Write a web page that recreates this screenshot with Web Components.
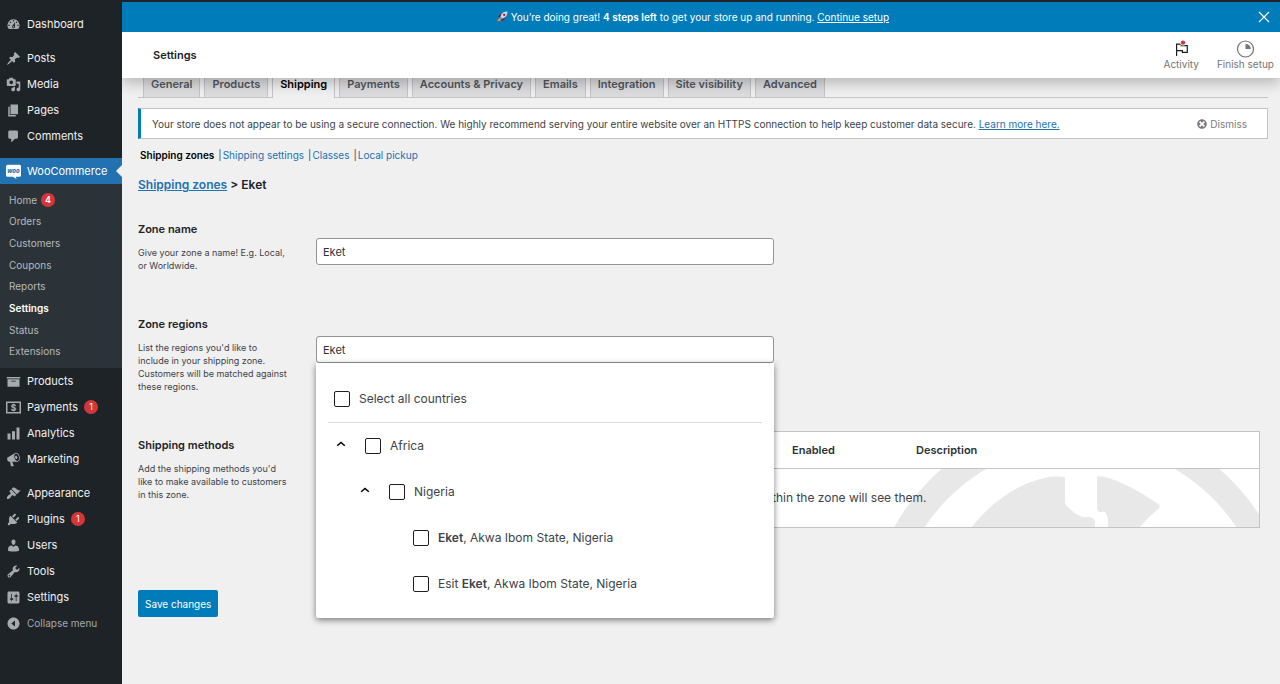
<!DOCTYPE html>
<html lang="en">
<head>
<meta charset="utf-8">
<meta name="viewport" content="width=device-width, initial-scale=1">
<title>Shipping zones - WooCommerce settings</title>
<style>
  body {
    margin: 0;
    background: #f0f0f0;
    color: #3c434a;
    font-family: Inter, "Liberation Sans", sans-serif;
    font-size: 11px;
    line-height: 16px;
  }
</style>
</head>
<body>
<wp-admin>
  <wp-menu slot="menu"></wp-menu>
  <wc-banner slot="top"></wc-banner>
  <wc-header slot="top" heading="Settings"></wc-header>
  <wc-tabs current="Shipping"></wc-tabs>
  <wc-notice></wc-notice>
  <wc-subnav></wc-subnav>
  <wc-zone-form></wc-zone-form>
</wp-admin>

<script>
const ICONS = {
  dashboard: 'M3.76 16h12.48A7.998 7.998 0 0 0 10 3a7.998 7.998 0 0 0-6.24 13zM10 4c.55 0 1 .45 1 1s-.45 1-1 1-1-.45-1-1 .45-1 1-1zM6 6c.55 0 1 .45 1 1s-.45 1-1 1-1-.45-1-1 .45-1 1-1zm8 0c.55 0 1 .45 1 1s-.45 1-1 1-1-.45-1-1 .45-1 1-1zm-5.37 5.55L12 7v6c0 1.1-.9 2-2 2s-2-.9-2-2c0-.57.24-1.08.63-1.45zM4 10c.55 0 1 .45 1 1s-.45 1-1 1-1-.45-1-1 .45-1 1-1zm12 0c.55 0 1 .45 1 1s-.45 1-1 1-1-.45-1-1 .45-1 1-1zm-5 3c0-.55-.45-1-1-1s-1 .45-1 1 .45 1 1 1 1-.45 1-1z',
  post: 'M10.44 3.02l1.82-1.82 6.36 6.35-1.83 1.82c-1.05-.68-2.48-.57-3.41.36l-.75.75c-.92.93-1.04 2.35-.35 3.41l-1.83 1.82-2.41-2.41-2.8 2.79c-.42.42-3.38 2.71-3.8 2.29s1.86-3.39 2.28-3.81l2.79-2.79L4.1 9.36l1.83-1.82c1.05.69 2.48.57 3.4-.36l.75-.75c.93-.92 1.05-2.35.36-3.41z',
  media: 'M13 11V4c0-.55-.45-1-1-1h-1.67L9 1H5L3.67 3H2c-.55 0-1 .45-1 1v7c0 .55.45 1 1 1h10c.55 0 1-.45 1-1zM7 4.5c1.38 0 2.5 1.12 2.5 2.5S8.38 9.5 7 9.5 4.5 8.38 4.5 7 5.62 4.5 7 4.5zM14 6h5v10.5c0 1.38-1.12 2.5-2.5 2.5S14 17.88 14 16.5s1.12-2.5 2.5-2.5c.17 0 .34.02.5.05V9h-3V6zm-4 8.05V13h2v3.5c0 1.38-1.12 2.5-2.5 2.5S7 17.88 7 16.5 8.12 14 9.5 14c.17 0 .34.02.5.05z',
  page: 'M6 15V2h10v13H6zm-1 1h8v2H3V5h2v11z',
  comments: 'M5 2h9c1.1 0 2 .9 2 2v7c0 1.1-.9 2-2 2h-2l-5 5v-5H5c-1.1 0-2-.9-2-2V4c0-1.1.9-2 2-2z',
  archive: 'M19 4v2H1V4h18zM2 7h16v10H2V7zm11 3V9H7v1h6z',
  chart: 'M18 18V2h-4v16h4zm-6 0V7H8v11h4zm-6 0v-8H2v8h4z',
  megaphone: 'M18.15 5.94c.46 1.62.38 3.22-.02 4.48-.42 1.28-1.26 2.18-2.3 2.48-.16.06-.26.06-.4.06-.06.02-.12.02-.18.02-.06.02-.14.02-.22.02h-6.8l2.22 5.5c.02.14-.06.26-.14.34-.08.1-.24.16-.34.16H6.95c-.1 0-.26-.06-.34-.16-.08-.08-.16-.2-.14-.34l-1-5.5H4.25l-.02-.02c-.5.06-1.08-.18-1.54-.62s-.88-1.08-1.06-1.88c-.24-.8-.2-1.56-.02-2.2.18-.62.58-1.08 1.06-1.3l.02-.02 9-5.4c.1-.06.18-.1.24-.16.06-.04.14-.08.24-.12.16-.08.28-.12.5-.18 1.04-.3 2.24.1 3.22.98s1.84 2.24 2.26 3.86zm-2.58 5.98h-.02c.4-.1.74-.34 1.04-.7.58-.7.86-1.76.86-3.04 0-.64-.1-1.3-.28-1.98-.34-1.36-1.02-2.5-1.78-3.24s-1.68-1.1-2.46-.88c-.82.22-1.4.96-1.7 2-.32 1.04-.28 2.36.06 3.72.38 1.36 1 2.5 1.8 3.24.78.74 1.62 1.1 2.48.88zm-2.54-7.08c.22-.04.42-.02.62.04.38.16.76.48 1.02 1s.42 1.2.42 1.78c0 .3-.04.56-.12.8-.18.48-.44.84-.86.94-.34.1-.8-.06-1.14-.4s-.64-.86-.78-1.5c-.18-.62-.12-1.24.02-1.72s.48-.84.82-.94z',
  appearance: 'M14.48 11.06L7.41 3.99l1.5-1.5c.5-.56 2.3-.47 3.51.32 1.21.8 1.43 1.28 2.91 2.1 1.18.64 2.45 1.26 4.45.85zm-.71.71L6.7 4.7 4.93 6.47c-.39.39-.39 1.02 0 1.41l1.06 1.06c.39.39.39 1.03 0 1.42-.6.6-1.43 1.11-2.21 1.69-.35.26-.7.53-1.01.84C1.43 14.23.4 16.08 1.4 17.07c.99 1 2.84-.03 4.18-1.36.31-.31.58-.66.85-1.02.57-.78 1.08-1.61 1.69-2.21.39-.39 1.02-.39 1.41 0l1.06 1.06c.39.39 1.02.39 1.41 0z',
  plugins: 'M13.11 4.36L9.87 7.6 8 5.73l3.24-3.24c.35-.34 1.05-.2 1.56.32.52.51.66 1.21.31 1.55zm-8 1.77l.91-1.12 9.01 9.01-1.19.84c-.71.71-2.63 1.16-3.82 1.16H6.14L4.9 17.26c-.59.59-1.54.59-2.12 0-.59-.58-.59-1.53 0-2.12l1.24-1.24v-3.88c0-1.13.4-3.19 1.09-3.89zm7.26 3.97l3.24-3.24c.34-.35 1.04-.21 1.55.31.52.51.66 1.21.31 1.55l-3.24 3.25z',
  users: 'M10 9.25c-2.27 0-2.73-3.44-2.73-3.44C7 4.02 7.82 2 9.97 2c2.16 0 2.98 2.02 2.71 3.81 0 0-.41 3.44-2.68 3.44zm0 2.57L12.72 10c2.39 0 4.52 2.33 4.52 4.53v2.49s-3.65 1.13-7.24 1.13c-3.65 0-7.24-1.13-7.24-1.13v-2.49c0-2.25 1.94-4.48 4.47-4.48z',
  tools: 'M16.68 9.77c-1.34 1.34-3.3 1.67-4.95.99l-5.41 6.52c-.99.99-2.59.99-3.58 0s-.99-2.59 0-3.57l6.52-5.42c-.68-1.65-.35-3.61.99-4.95 1.28-1.28 3.12-1.62 4.72-1.06l-2.89 2.89 2.82 2.82 2.86-2.87c.53 1.58.18 3.39-1.08 4.65zM3.81 16.21c.4.39 1.04.39 1.43 0 .4-.4.4-1.04 0-1.43-.39-.4-1.03-.4-1.43 0-.39.39-.39 1.03 0 1.43z',
  settings: 'M18 16V4c0-1.1-.9-2-2-2H4c-1.1 0-2 .9-2 2v12c0 1.1.9 2 2 2h12c1.1 0 2-.9 2-2zM8 11h1c.55 0 1 .45 1 1s-.45 1-1 1H8v1.5c0 .28-.22.5-.5.5s-.5-.22-.5-.5V13H6c-.55 0-1-.45-1-1s.45-1 1-1h1V5.5c0-.28.22-.5.5-.5s.5.22.5.5V11zm5-2h-1c-.55 0-1-.45-1-1s.45-1 1-1h1V5.5c0-.28.22-.5.5-.5s.5.22.5.5V7h1c.55 0 1 .45 1 1s-.45 1-1 1h-1v5.5c0 .28-.22.5-.5.5s-.5-.22-.5-.5V9z',
  collapse: 'M10 2c4.42 0 8 3.58 8 8s-3.58 8-8 8-8-3.58-8-8 3.58-8 8-8zm2 12V6l-5 4z',
  dismiss: 'M10 2c4.42 0 8 3.58 8 8s-3.58 8-8 8-8-3.58-8-8 3.58-8 8-8zm5 11l-3-3 3-3-2-2-3 3-3-3-2 2 3 3-3 3 2 2 3-3 3 3z'
};

// Icons that are more than one filled path
const DRAWN = {
  woo: `
    <path fill="#fff" d="M2 1h16a2 2 0 0 1 2 2v12a2 2 0 0 1-2 2h-5l1 3-5-3H2a2 2 0 0 1-2-2V3a2 2 0 0 1 2-2z"/>
    <text x="10" y="12" text-anchor="middle" font-size="8" font-weight="800" font-style="italic" fill="#2271b1">woo</text>`,
  payments: `
    <rect x="1" y="3" width="18" height="14" fill="none" stroke="currentColor" stroke-width="2"/>
    <text x="10" y="14" text-anchor="middle" font-size="11" font-weight="800">$</text>`
};

class WpIcon extends HTMLElement {
  connectedCallback() {
    const name = this.getAttribute('name');
    const size = this.getAttribute('size') || 15;
    if (!this.shadowRoot) this.attachShadow({ mode: 'open' });
    this.shadowRoot.innerHTML = `
      <style>
        :host { display: block; flex: none; }
        svg { display: block; fill: currentColor; overflow: visible; }
      </style>
      <svg width="${size}" height="${size}" viewBox="0 0 20 20" aria-hidden="true">
        ${DRAWN[name] || `<path fill-rule="evenodd" d="${ICONS[name]}"/>`}
      </svg>
    `;
  }
}

class WpAdmin extends HTMLElement {
  constructor() {
    super();
    this.attachShadow({ mode: 'open' }).innerHTML = `
      <style>
        :host {
          display: grid;
          grid-template-columns: 122px minmax(0, 1fr);
          min-height: 100vh;
          box-sizing: border-box;
          border-top: 2px solid #1d2327;
        }
        .top {
          position: relative;
          z-index: 2;
          box-shadow: 0 6px 12px rgba(0, 0, 0, .22);
          clip-path: inset(0 0 -24px 0);
        }
        .content { padding: 0 12px 24px 16px; }
      </style>
      <slot name="menu"></slot>
      <div>
        <div class="top"><slot name="top"></slot></div>
        <main class="content"><slot></slot></main>
      </div>
    `;
  }
}

class WpMenuItem extends HTMLElement {
  connectedCallback() {
    const count = this.getAttribute('count');
    if (!this.shadowRoot) this.attachShadow({ mode: 'open' });
    this.shadowRoot.innerHTML = `
      <style>
        :host { display: block; color: #a7aaad; }
        a {
          display: flex;
          align-items: center;
          gap: 6px;
          height: 26px;
          padding-left: 6px;
          color: inherit;
          text-decoration: none;
        }
        .label { color: #f0f0f1; }
        :host([quiet]) .label { color: #a7aaad; font-size: 10px; }
        :host([current]) a { position: relative; background: #2271b1; }
        :host([current]) .label { color: #fff; }
        :host([current]) a::after {
          content: "";
          position: absolute;
          right: 0;
          border: 6px solid transparent;
          border-right-color: #f0f0f0;
          border-left-width: 0;
        }
        .count {
          min-width: 14px;
          border-radius: 7px;
          background: #d63638;
          color: #fff;
          font-size: 9px;
          line-height: 14px;
          text-align: center;
        }
      </style>
      <a href="#">
        <wp-icon name="${this.getAttribute('icon')}"></wp-icon>
        <span class="label"><slot></slot></span>
        ${count ? `<span class="count">${count}</span>` : ''}
      </a>
    `;
  }
}

class WpMenu extends HTMLElement {
  constructor() {
    super();
    this.attachShadow({ mode: 'open' }).innerHTML = `
      <style>
        :host { display: block; background: #1d2327; }
        nav { padding-top: 9px; }
        .group { margin-bottom: 8px; }
        .group.main { margin-bottom: 9px; }
        ul {
          display: flex;
          flex-direction: column;
          box-sizing: border-box;
          min-height: 184px;
          margin: 0;
          padding: 5px 9px 6px;
          list-style: none;
          background: #2c3338;
          font-size: 10px;
        }
        li { display: flex; align-items: center; flex: 1; gap: 4px; }
        li a { color: #b4b9be; text-decoration: none; }
        li a[aria-current] { color: #fff; font-weight: 600; }
        .count {
          min-width: 14px;
          border-radius: 7px;
          background: #d63638;
          color: #fff;
          font-size: 9px;
          font-weight: 600;
          line-height: 14px;
          text-align: center;
        }
      </style>
      <nav aria-label="Main menu">
        <div class="group"><wp-menu-item icon="dashboard">Dashboard</wp-menu-item></div>
        <div class="group main">
          <wp-menu-item icon="post">Posts</wp-menu-item>
          <wp-menu-item icon="media">Media</wp-menu-item>
          <wp-menu-item icon="page">Pages</wp-menu-item>
          <wp-menu-item icon="comments">Comments</wp-menu-item>
        </div>
        <div class="group">
          <wp-menu-item icon="woo" current>WooCommerce</wp-menu-item>
          <ul>
            <li><a href="#">Home</a><span class="count">4</span></li>
            <li><a href="#">Orders</a></li>
            <li><a href="#">Customers</a></li>
            <li><a href="#">Coupons</a></li>
            <li><a href="#">Reports</a></li>
            <li><a href="#" aria-current="page">Settings</a></li>
            <li><a href="#">Status</a></li>
            <li><a href="#">Extensions</a></li>
          </ul>
          <wp-menu-item icon="archive">Products</wp-menu-item>
          <wp-menu-item icon="payments" count="1">Payments</wp-menu-item>
          <wp-menu-item icon="chart">Analytics</wp-menu-item>
          <wp-menu-item icon="megaphone">Marketing</wp-menu-item>
        </div>
        <wp-menu-item icon="appearance">Appearance</wp-menu-item>
        <wp-menu-item icon="plugins" count="1">Plugins</wp-menu-item>
        <wp-menu-item icon="users">Users</wp-menu-item>
        <wp-menu-item icon="tools">Tools</wp-menu-item>
        <wp-menu-item icon="settings">Settings</wp-menu-item>
        <wp-menu-item icon="collapse" quiet>Collapse menu</wp-menu-item>
      </nav>
    `;
  }
}

class WcBanner extends HTMLElement {
  constructor() {
    super();
    this.attachShadow({ mode: 'open' }).innerHTML = `
      <style>
        :host {
          display: flex;
          align-items: center;
          height: 30px;
          padding: 0 8px;
          background: #007cba;
          color: #fff;
          font-size: 10px;
        }
        p { flex: 1; margin: 0; text-align: center; }
        p svg { vertical-align: -1px; }
        strong { font-weight: 600; }
        a { color: inherit; }
        button {
          display: block;
          padding: 0;
          border: 0;
          background: none;
          color: inherit;
        }
        button svg { display: block; }
      </style>
      <p>
        <svg width="11" height="11" viewBox="0 0 20 20" aria-hidden="true">
          <path fill="#f4900c" d="M1 19c0-3 1-5 3-6l3 3c-1 2-3 3-6 3z"/>
          <path fill="#a0041e" d="M2 10l4-4 4 1-5 5zM10 18l4-4-1-4-5 5z"/>
          <path fill="#ccd6dd" d="M19 1c-6 0-10 2-13 9l4 4c7-3 9-7 9-13z"/>
          <circle cx="13" cy="7" r="2" fill="#a0041e"/>
          <path fill="#55acee" d="M6 11l3 3-3 2-2-2z"/>
        </svg>
        You’re doing great! <strong>4 steps left</strong> to get your store up and running. <a href="#">Continue setup</a>
      </p>
      <button type="button" aria-label="Close">
        <svg width="16" height="16" viewBox="0 0 16 16" fill="none" stroke="currentColor" stroke-width="1.2">
          <path d="M3 3l10 10M13 3L3 13"/>
        </svg>
      </button>
    `;
  }
}

class WcHeader extends HTMLElement {
  connectedCallback() {
    if (!this.shadowRoot) this.attachShadow({ mode: 'open' });
    this.shadowRoot.innerHTML = `
      <style>
        :host {
          display: flex;
          align-items: center;
          height: 46px;
          padding: 0 6px 0 31px;
          background: #fff;
        }
        h1 {
          flex: 1;
          margin: 0;
          color: #1e1e1e;
          font-size: 11px;
          font-weight: 600;
        }
        .actions { display: flex; gap: 18px; }
        button {
          display: grid;
          justify-items: center;
          padding: 0;
          border: 0;
          background: none;
          color: #757575;
          font: inherit;
          font-size: 10px;
          line-height: 12px;
        }
      </style>
      <h1>${this.getAttribute('heading')}</h1>
      <div class="actions">
        <button type="button">
          <svg width="18" height="18" viewBox="0 0 18 18" fill="none" stroke="#1e1e1e" stroke-width="1.2">
            <path d="M4.600 16V4.200h4.600v1.500h6.100v6.600h-4.900v-1.700H4.600"/>
            <circle cx="11" cy="2.800" r="2.800" fill="#fff" stroke="none"/>
            <circle cx="11" cy="2.600" r="2.200" fill="#d63638" stroke="none"/>
          </svg>
          Activity
        </button>
        <button type="button">
          <svg width="18" height="18" viewBox="0 0 18 18" fill="none" stroke="#757575" stroke-width="1.2">
            <circle cx="9.500" cy="9" r="8"/>
            <path fill="#757575" stroke="none" d="M9.500 3.700a5.300 5.300 0 0 1 5.300 5.300H9.500z"/>
          </svg>
          Finish setup
        </button>
      </div>
    `;
  }
}

class WcTabs extends HTMLElement {
  connectedCallback() {
    const current = this.getAttribute('current');
    const tabs = ['General', 'Products', 'Shipping', 'Payments', 'Accounts & Privacy',
      'Emails', 'Integration', 'Site visibility', 'Advanced'];
    if (!this.shadowRoot) this.attachShadow({ mode: 'open' });
    this.shadowRoot.innerHTML = `
      <style>
        :host { display: block; margin-top: -9px; }
        nav {
          display: flex;
          gap: 4px;
          padding-left: 5px;
          border-bottom: 1px solid #c3c4c7;
        }
        a {
          padding: 6px 7px 5px;
          border: 1px solid #c3c4c7;
          border-bottom: 0;
          background: #dcdcde;
          color: #50575e;
          font-weight: 600;
          line-height: 16px;
          text-decoration: none;
        }
        a[aria-current] {
          margin-bottom: -1px;
          background: #f0f0f0;
          color: #000;
        }
      </style>
      <nav aria-label="Settings">
        ${tabs.map(tab => `<a href="#"${tab === current ? ' aria-current="page"' : ''}>${tab.replace('&', '&amp;')}</a>`).join('')}
      </nav>
    `;
  }
}

class WcNotice extends HTMLElement {
  constructor() {
    super();
    this.attachShadow({ mode: 'open' }).innerHTML = `
      <style>
        :host {
          display: flex;
          align-items: center;
          justify-content: space-between;
          margin-top: 10px;
          padding: 7px 20px 6px 11px;
          border: 1px solid #c3c4c7;
          border-left: 3px solid #007cba;
          background: #fff;
          font-size: 10px;
        }
        p { margin: 0; }
        p a { color: #2271b1; }
        .dismiss {
          display: flex;
          align-items: center;
          gap: 2px;
          color: #787c82;
          text-decoration: none;
        }
      </style>
      <p>Your store does not appear to be using a secure connection. We highly recommend serving your entire website over an HTTPS connection to help keep customer data secure. <a href="#">Learn more here.</a></p>
      <a class="dismiss" href="#"><wp-icon name="dismiss" size="12"></wp-icon>Dismiss</a>
    `;
  }
}

class WcSubnav extends HTMLElement {
  constructor() {
    super();
    this.attachShadow({ mode: 'open' }).innerHTML = `
      <style>
        :host { display: block; margin-top: 8px; font-size: 10px; }
        ul { display: flex; gap: 4px; margin: 0; padding: 0 0 0 2px; list-style: none; }
        li + li::before { content: "|"; margin-right: 1px; }
        a { color: #2271b1; text-decoration: none; }
        a[aria-current] { color: #000; font-weight: 600; }
      </style>
      <ul>
        <li><a href="#" aria-current="page">Shipping zones</a></li>
        <li><a href="#">Shipping settings</a></li>
        <li><a href="#">Classes</a></li>
        <li><a href="#">Local pickup</a></li>
      </ul>
    `;
  }
}

// One settings row: label and help text on the left, the control on the right
class WcZoneRow extends HTMLElement {
  constructor() {
    super();
    this.attachShadow({ mode: 'open' }).innerHTML = `
      <style>
        :host {
          display: grid;
          grid-template-columns: 152px minmax(0, 1fr);
          column-gap: 26px;
        }
        .info { padding: 16px 0 28px; }
        .help {
          margin: 9px 0 0;
          font-size: 9px;
          line-height: 13px;
        }
        .field { padding-top: var(--field-top, 10px); }
      </style>
      <div class="info">
        <slot name="label"></slot>
        <p class="help"><slot name="help"></slot></p>
      </div>
      <div class="field"><slot></slot></div>
    `;
  }
}

class WcRegionOption extends HTMLElement {
  connectedCallback() {
    const level = Number(this.getAttribute('level') || 0);
    // leaves have no toggle, so they leave room for one
    const indent = level * 24 + (this.hasAttribute('leaf') ? 37 : 6);
    if (!this.shadowRoot) this.attachShadow({ mode: 'open' });
    this.shadowRoot.innerHTML = `
      <style>
        :host {
          display: flex;
          align-items: center;
          height: 46px;
          padding-left: ${indent}px;
          color: #3c434a;
          font-size: 12px;
        }
        button {
          display: block;
          width: 14px;
          margin: 0 17px 4px 0;
          padding: 0;
          border: 0;
          background: none;
          color: #000;
        }
        button svg { display: block; }
        label { display: flex; align-items: center; gap: 9px; }
        input {
          appearance: none;
          width: 16px;
          height: 16px;
          margin: 0;
          border: 1px solid #1e1e1e;
          border-radius: 2px;
          background: #fff;
        }
      </style>
      ${this.hasAttribute('expanded') ? `
        <button type="button" aria-expanded="true" aria-label="Collapse">
          <svg width="14" height="14" viewBox="0 0 14 14" fill="none" stroke="currentColor" stroke-width="1.500">
            <path d="M3.200 8.800L7 5.400l3.800 3.400"/>
          </svg>
        </button>
      ` : ''}
      <label><input type="checkbox"><span><slot></slot></span></label>
    `;
  }
}

class WcRegionPicker extends HTMLElement {
  constructor() {
    super();
    this.attachShadow({ mode: 'open' }).innerHTML = `
      <style>
        :host { display: block; position: relative; max-width: 458px; }
        .list {
          position: absolute;
          top: 100%;
          left: 0;
          right: 0;
          z-index: 1;
          padding: 13px 12px 11px;
          border-radius: 0 0 2px 2px;
          background: #fff;
          box-shadow: 0 2px 6px rgba(0, 0, 0, .5);
        }
        .all { border-bottom: 1px solid #dcdcde; }
        b { font-weight: 600; }
      </style>
      <slot name="search"></slot>
      <div class="list">
        <div class="all"><wc-region-option>Select all countries</wc-region-option></div>
        <wc-region-option expanded>Africa</wc-region-option>
        <wc-region-option level="1" expanded>Nigeria</wc-region-option>
        <wc-region-option level="2" leaf><b>Eket</b>, Akwa Ibom State, Nigeria</wc-region-option>
        <wc-region-option level="2" leaf>Esit <b>Eket</b>, Akwa Ibom State, Nigeria</wc-region-option>
      </div>
    `;
  }
}

class WcMethodTable extends HTMLElement {
  constructor() {
    super();
    this.attachShadow({ mode: 'open' }).innerHTML = `
      <style>
        :host { display: block; padding-right: 8px; }
        table {
          width: 100%;
          table-layout: fixed;
          border: 1px solid #c3c4c7;
          border-spacing: 0;
          background: #fff;
        }
        th {
          height: 36px;
          padding: 0 14px;
          border-bottom: 1px solid #c3c4c7;
          color: #2c3338;
          font-weight: 600;
          text-align: left;
        }
        .title { width: 433px; }
        .enabled { width: 96px; }
        td { position: relative; height: 58px; padding: 0 28px; font-size: 12px; }
        td svg { position: absolute; top: 0; right: 0; }
        p { position: relative; margin: 0; }
      </style>
      <table>
        <thead>
          <tr>
            <th class="title">Title</th>
            <th class="enabled">Enabled</th>
            <th>Description</th>
          </tr>
        </thead>
        <tbody>
          <tr>
            <td colspan="3">
              <svg width="369" height="58" viewBox="890 469 369 58" fill="#e8e8e8" aria-hidden="true">
                <circle cx="1080.500" cy="630.500" r="200" fill="none" stroke="#e8e8e8" stroke-width="26"/>
                <path d="M971 528C993 500 1020 483 1046 477.500Q1052 476 1065 477V502Q1065 505 1068 507Q1077 516 1083 517H1090Q1095 518 1095 522V528z"/>
                <path d="M1097 476.500H1103Q1128 483 1158 504Q1161 506 1159 508Q1147 518 1139 528H1108V522Q1108 514 1104 511.500Q1099 514 1097 509z"/>
              </svg>
              <p>You can add multiple shipping methods within this zone. Only customers within the zone will see them.</p>
            </td>
          </tr>
        </tbody>
      </table>
    `;
  }
}

class WcZoneForm extends HTMLElement {
  constructor() {
    super();
    this.attachShadow({ mode: 'open' }).innerHTML = `
      <style>
        :host { display: block; }
        h2 { margin: 14px 0 12px; color: #1d2327; font-size: 12px; font-weight: 600; line-height: 16px; }
        h2 a { color: #2271b1; }
        label, h3 {
          display: block;
          margin: 0;
          color: #1d2327;
          font-size: 11px;
          font-weight: 600;
          line-height: 16px;
        }
        input {
          display: block;
          box-sizing: border-box;
          width: 100%;
          max-width: 458px;
          height: 27px;
          padding: 0 6px;
          border: 1px solid #949494;
          border-radius: 3px;
          background: #fff;
          color: #2c3338;
          font: inherit;
        }
        .name { --field-top: 33px; }
        .regions { --field-top: 36px; }
        .save {
          margin-top: 61px;
          padding: 0 7px;
          height: 27px;
          border: 0;
          border-radius: 2px;
          background: #007cba;
          color: #fff;
          font: inherit;
          font-size: 10px;
        }
      </style>
      <form>
        <h2><a href="#">Shipping zones</a> &gt; Eket</h2>
        <wc-zone-row class="name">
          <label slot="label" for="zone-name">Zone name</label>
          <span slot="help">Give your zone a name! E.g. Local, or Worldwide.</span>
          <input id="zone-name" type="text" value="Eket">
        </wc-zone-row>
        <wc-zone-row class="regions">
          <label slot="label" for="zone-regions">Zone regions</label>
          <span slot="help">List the regions you'd like to include in your shipping zone. Customers will be matched against these regions.</span>
          <wc-region-picker>
            <input slot="search" id="zone-regions" type="text" value="Eket">
          </wc-region-picker>
        </wc-zone-row>
        <wc-zone-row>
          <h3 slot="label">Shipping methods</h3>
          <span slot="help">Add the shipping methods you'd like to make available to customers in this zone.</span>
          <wc-method-table></wc-method-table>
        </wc-zone-row>
        <button class="save" type="submit">Save changes</button>
      </form>
    `;
  }
}

customElements.define('wp-icon', WpIcon);
customElements.define('wp-admin', WpAdmin);
customElements.define('wp-menu-item', WpMenuItem);
customElements.define('wp-menu', WpMenu);
customElements.define('wc-banner', WcBanner);
customElements.define('wc-header', WcHeader);
customElements.define('wc-tabs', WcTabs);
customElements.define('wc-notice', WcNotice);
customElements.define('wc-subnav', WcSubnav);
customElements.define('wc-zone-row', WcZoneRow);
customElements.define('wc-region-option', WcRegionOption);
customElements.define('wc-region-picker', WcRegionPicker);
customElements.define('wc-method-table', WcMethodTable);
customElements.define('wc-zone-form', WcZoneForm);
</script>
</body>
</html>
